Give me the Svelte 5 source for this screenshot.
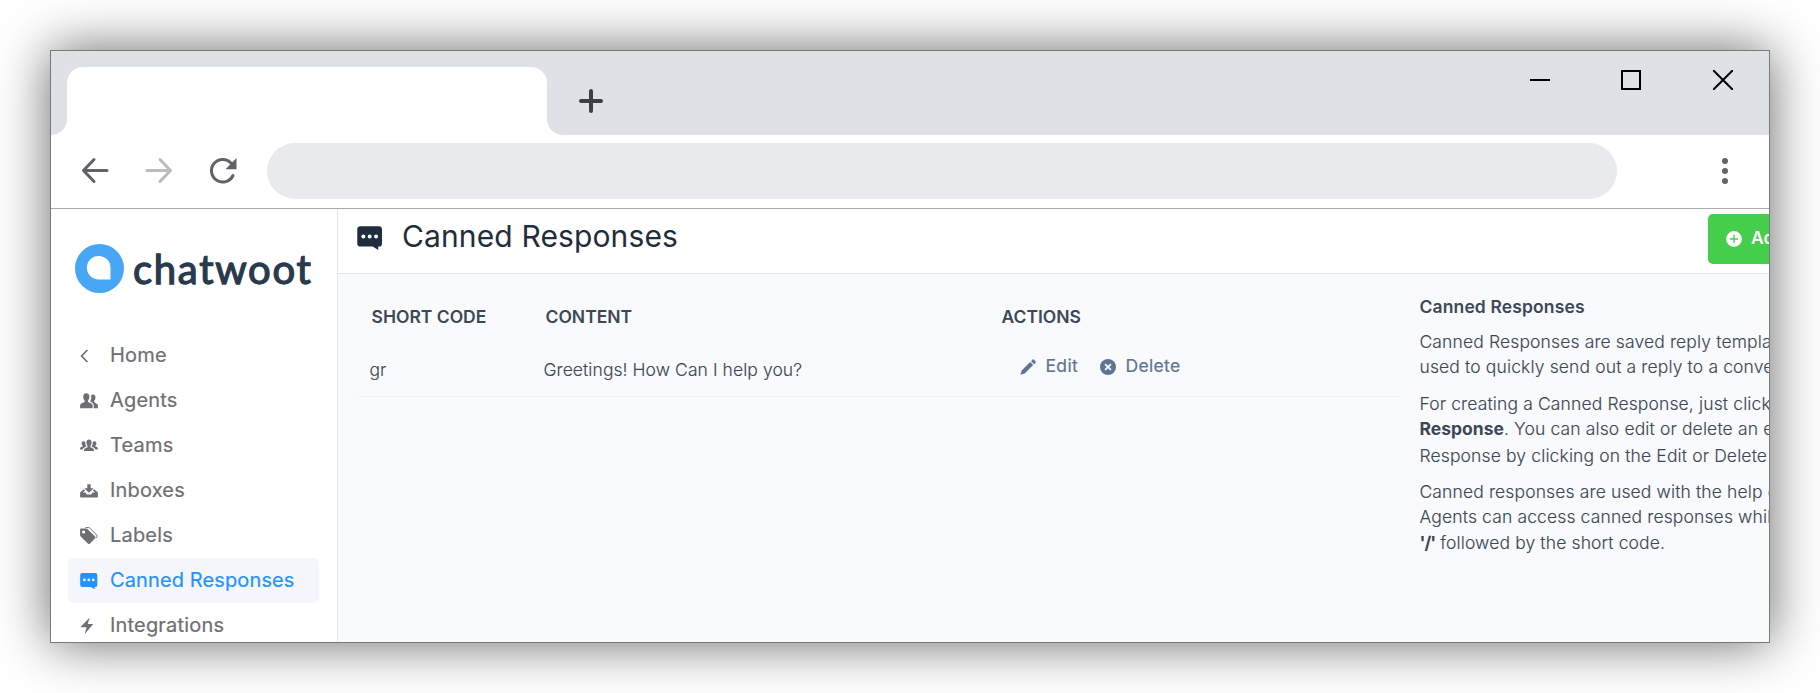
<script>
  const nav = [
    { label: 'Home', icon: 'back' },
    { label: 'Agents', icon: 'agents' },
    { label: 'Teams', icon: 'teams' },
    { label: 'Inboxes', icon: 'inbox' },
    { label: 'Labels', icon: 'tag' },
    { label: 'Canned Responses', icon: 'chat', active: true },
    { label: 'Integrations', icon: 'bolt' }
  ];
</script>

{#snippet icon(name)}
  <svg class="icon" viewBox="0 0 18 18" fill="currentColor">
    {#if name === 'back'}
      <path d="M7.4 3 1.6 9l5.8 6" fill="none" stroke="currentColor" stroke-width="1.7" />
    {:else if name === 'agents'}
      <path d="M6.3 1.2c2 0 3.1 1.4 3.1 3.3 0 1.700-.6 3-1.300 3.900v1.500l3.300 1.600c.9.500 1.200 1.200 1.200 2.200v2.600H.1v-2.600c0-1 .3-1.700 1.200-2.200l3.300-1.600V8.400C3.700 7.500 3.200 6.200 3.200 4.500c0-1.900 1.100-3.300 3.100-3.300Z" />
      <path d="M11 3.200c.6-.6 1.200-.8 1.900-.8 1.700 0 2.600 1.200 2.600 2.900 0 1.500-.5 2.500-1.200 3.300v1.600l2.700 1.700c.7.400.9.900.9 1.700v2.700h-4.200v-2.800c0-1.500-.9-2.500-2.700-3.500l-.6-.3V8.600c.8-1.300 1.200-3.400.6-5.400Z" />
    {:else if name === 'teams'}
      <path d="M9 2.600c1.700 0 2.600 1.200 2.600 2.900 0 1.600-.5 2.700-1.200 3.500v1.200l2.200 1c1 .5 1.400 1.100 1.400 2v.9H4v-.9c0-.9.400-1.500 1.400-2l2.200-1V9C6.900 8.200 6.400 7.100 6.400 5.500c0-1.700.9-2.900 2.600-2.900Z" />
      <path d="M3.700 4.300c.7 0 1.200.2 1.600.7-.2 1.800.2 3.200 1.200 4.400l-2.200 1.200c-.9.500-1.400 1.200-1.600 2H.1v-.8c0-.8.3-1.300 1.100-1.700l1.400-.7V8.500C2 7.900 1.600 7.200 1.600 6.400c0-1.300.8-2.100 2.100-2.100ZM14.300 4.300c-.7 0-1.200.2-1.600.7.200 1.800-.2 3.200-1.200 4.400l2.200 1.200c.9.500 1.400 1.200 1.600 2h2.600v-.8c0-.8-.3-1.300-1.100-1.700l-1.400-.7V8.500c.6-.6 1-1.300 1-2.100 0-1.300-.8-2.100-2.100-2.100Z" />
    {:else if name === 'inbox'}
      <path d="M7.300 2.200h3.400v4h3L9 10.700 4.300 6.200h3Z" />
      <path d="m3.800 7.300 1.300 1.200-2.300 2h2.800l1 2h4.800l1-2h2.800l-2.300-2 1.300-1.200 3.200 2.800c.4.300.5.700.5 1.200v3.200c0 .7-.4 1-1 1H1.100c-.6 0-1-.3-1-1v-3.200c0-.5.1-.9.500-1.200Z" />
    {:else if name === 'tag'}
      <path fill-rule="evenodd" d="M1.300 1.500h4.900c.5 0 .9.200 1.200.5l7.700 7.600c.5.500.5 1.200 0 1.700l-5.300 5.500c-.5.500-1.200.5-1.700 0L.7 9.500C.3 9.100.1 8.700.1 8.200V2.800c0-.8.5-1.300 1.200-1.300Zm2.300 1.900a1.600 1.600 0 1 0 0 3.200 1.600 1.600 0 0 0 0-3.200Z" />
      <path d="M5.500.6h3.200c.4 0 .7.100 1 .4l7.300 7.300c.5.500.5 1 .1 1.500l-1.300 1.300" fill="none" stroke="currentColor" stroke-width="1" />
    {:else if name === 'chat'}
      <path fill-rule="evenodd" d="M2.400.9h12.900c1.200 0 2 .8 2 2v10c0 1.200-.7 2-1.800 2h-.8v2.400l-3.800-2.400H2.400c-1.300 0-2.200-.8-2.200-2V2.900c0-1.200.9-2 2.200-2Zm2 5.600a1.400 1.400 0 1 0 0 2.800 1.400 1.400 0 0 0 0-2.800Zm4.400 0a1.400 1.400 0 1 0 0 2.800 1.400 1.400 0 0 0 0-2.800Zm4.400 0a1.400 1.400 0 1 0 0 2.800 1.400 1.400 0 0 0 0-2.800Z" />
    {:else if name === 'bolt'}
      <path d="M9.700.6 7.800 7h5.400L4.600 17.200l2-7H.3Z" />
    {:else if name === 'edit'}
      <path d="M12.400 2.400 13.900.9c.7-.7 1.300-.6 1.900 0l1.500 1.600c.6.600.7 1.200 0 1.900l-1.400 1.400Zm-1 1 3.400 3.400-9.500 9.400L.4 17.600l1.500-4.700Z" />
    {:else if name === 'delete'}
      <circle cx="9" cy="9" r="9" />
      <path d="m5.700 5.700 6.600 6.600m0-6.600-6.600 6.600" fill="none" stroke="#f9fafc" stroke-width="2" />
    {:else if name === 'add'}
      <circle cx="9" cy="9" r="8.900" />
      <path d="M9 4.300v9.400M4.300 9h9.400" fill="none" stroke="#44ce4b" stroke-width="1.500" />
    {/if}
  </svg>
{/snippet}

<div class="page">
  <div class="window">
    <div class="tabs">
      <div class="gutter"></div>
      <div class="tab"></div>
      <div class="strip">
        <svg class="plus" viewBox="0 0 24 24"><path d="M12 2v20M2 12h20" /></svg>
        <div class="controls">
          <svg viewBox="0 0 20 20"><path d="M0 10h20" /></svg>
          <svg viewBox="0 0 20 20"><path d="M1 1h18v18H1Z" /></svg>
          <svg viewBox="0 0 20 20"><path d="m0 0 20 20M20 0 0 20" /></svg>
        </div>
      </div>
    </div>

    <div class="toolbar">
      <svg class="tool" viewBox="0 0 28 28"><path d="M26 13.500H3M13 2.500 2.500 13.500 13 24.500" /></svg>
      <svg class="tool pale" viewBox="0 0 28 28"><path d="M2 13.500h23M15 2.500l10.500 11L15 24.500" /></svg>
      <svg class="tool" viewBox="0 0 28 28">
        <path d="M24 18.500A11.300 11.300 0 1 1 22 6" />
        <path class="solid" d="M27.500 1v11.300h-11Z" />
      </svg>
      <div class="address"></div>
      <svg class="dots" viewBox="0 0 6 26"><circle cx="3" cy="3" r="3" /><circle cx="3" cy="13" r="3" /><circle cx="3" cy="23" r="3" /></svg>
    </div>

    <div class="app">
      <aside>
        <div class="logo">
          <svg class="mark" viewBox="0 0 49 49">
            <circle cx="24.500" cy="24.500" r="24.500" fill="#47a7f6" />
            <path d="M35.500 35.500H23.600A11.800 11.800 0 1 1 35.500 23.700Z" fill="#fff" />
          </svg>
          <span class="word">chatwoot</span>
        </div>
        <nav>
          {#each nav as item}
            <a class:active={item.active}>{@render icon(item.icon)}<span>{item.label}</span></a>
          {/each}
        </nav>
      </aside>

      <main>
        <header>
          <h1>{@render icon('chat')}<span>Canned Responses</span></h1>
          <button class="add">{@render icon('add')}<span>Add Canned Response</span></button>
        </header>
        <div class="content">
          <table>
            <thead>
              <tr><th class="c1">Short Code</th><th class="c2">Content</th><th>Actions</th></tr>
            </thead>
            <tbody>
              <tr>
                <td>gr</td>
                <td>Greetings! How Can I help you?</td>
                <td>
                  <div class="actions">
                    <button>{@render icon('edit')}<span>Edit</span></button>
                    <button>{@render icon('delete')}<span>Delete</span></button>
                  </div>
                </td>
              </tr>
            </tbody>
          </table>
          <section class="help">
            <h2>Canned Responses</h2>
            <p>Canned Responses are saved reply templates which can be<br />used to quickly send out a reply to a conversation.</p>
            <p>For creating a Canned Response, just click on the <b>Add Canned</b><br /><b class="lead">Response</b>. You can also edit or delete an existing Canned<br />Response by clicking on the Edit or Delete button</p>
            <p>Canned responses are used with the help of <b>Short Codes</b>.<br />Agents can access canned responses while on a chat by typing<br /><b class="lead key">'/'</b> followed by the short code.</p>
          </section>
        </div>
      </main>
    </div>
  </div>
</div>

<style>
  :global(body) { overflow: hidden; background: #fff; }
  * { box-sizing: border-box; }
  .page { height: 693px; padding: 50px; font-family: Inter, sans-serif; }
  .window { display: flex; flex-direction: column; width: 1720px; height: 593px; overflow: hidden; border: 1px solid #777a7d; background: #fff; box-shadow: 0 0 50px rgba(0, 0, 0, .6); }
  svg { display: block; flex: none; }
  button { padding: 0; border: 0; background: none; color: inherit; font: inherit; letter-spacing: inherit; }

  .tabs { display: flex; flex: none; height: 84px; background: linear-gradient(#dee1e6 50%, #fff 50%); }
  .gutter { width: 16px; background: #dee1e6; border-bottom-right-radius: 16px; }
  .tab { width: 480px; background: linear-gradient(#dee1e6 50%, #fff 50%); }
  .tab::before { content: ''; display: block; height: 68px; margin-top: 16px; background: #fff; border-radius: 16px 16px 0 0; }
  .strip { display: flex; flex: 1; justify-content: space-between; padding: 38px 36px 0 32px; background: #dee1e6; border-bottom-left-radius: 16px; }
  .plus { width: 24px; height: 24px; fill: none; stroke: #3c4043; stroke-width: 4; stroke-linecap: round; }
  .controls { display: flex; gap: 72px; margin-top: -19px; }
  .controls svg { width: 20px; height: 20px; fill: none; stroke: #000; stroke-width: 2; }
  .controls svg:first-child { margin-right: -1px; }

  .toolbar { display: flex; flex: none; align-items: center; height: 74px; padding: 0 41px 2px 30px; border-bottom: 1px solid #a9abad; }
  .tool { width: 28px; height: 28px; margin-right: 36px; fill: none; stroke: #5f6368; stroke-width: 3; stroke-linecap: round; stroke-linejoin: round; }
  .pale { stroke: #babcbe; }
  .tool .solid { fill: #5f6368; stroke: none; }
  .address { width: 1350px; height: 56px; margin-left: -6px; border-radius: 28px; background: #e8eaed; }
  .dots { width: 6px; height: 26px; margin-left: auto; fill: #5f6368; }

  .app { display: flex; flex: 1; min-height: 0; }
  aside { flex: none; width: 287px; padding-top: 35px; border-right: 1px solid #e0e6ed; }
  .logo { display: flex; align-items: center; height: 49px; padding-left: 24px; }
  .mark { width: 49px; height: 49px; }
  .word { padding-top: 1px; margin-left: 9px; color: #293a4c; font-family: Lato, sans-serif; font-size: 40px; font-weight: 400; line-height: 49px; letter-spacing: 1.700px; -webkit-text-stroke: 1.300px #293a4c; }
  nav { display: flex; flex-direction: column; margin: 40px 18px 0 17px; }
  nav a { display: flex; flex: none; align-items: center; height: 45px; padding: 0 12px; border-radius: 5px; color: #6e6f73; font-size: 20px; font-weight: 400; letter-spacing: .180px; -webkit-text-stroke: .200px currentColor; }
  nav a span { margin: 0 0 2px 12px; white-space: nowrap; }
  nav .active { background: #f4f6fb; color: #1f93ff; letter-spacing: .120px; }
  .icon { width: 18px; height: 18px; }

  main { flex: 1; min-width: 0; overflow: hidden; background: #f9fafc; }
  header { display: flex; justify-content: space-between; height: 65px; border-bottom: 1px solid #e0e6ed; background: #fff; }
  h1 { display: flex; margin: 9px 0 0 19px; color: #1f2d3d; font-size: 30px; font-weight: 400; line-height: 36px; letter-spacing: .130px; }
  h1 .icon { width: 26px; height: 26px; margin-top: 7px; }
  h1 span { margin-left: 19px; }
  .add { display: flex; flex: none; align-items: center; width: 260px; height: 50px; margin: 5px -199px 0 0; padding-left: 18px; border-radius: 5px; background: #44ce4b; color: #fff; font-size: 17.500px; font-weight: 600; white-space: nowrap; }
  .add .icon { width: 16px; height: 16px; }
  .add span { margin: 0 0 3px 9px; }

  .content { display: flex; align-items: flex-start; padding-left: 20px; }
  table { flex: none; width: 1042px; margin-top: 20px; border-collapse: collapse; table-layout: fixed; color: #3c4858; }
  .c1 { width: 174px; }
  .c2 { width: 456px; }
  th { height: 46px; padding: 0 13.500px 2px; font-size: 17.500px; font-weight: 600; text-align: left; text-transform: uppercase; }
  td { height: 56px; padding: 3px 11.500px 0; border-bottom: 1px solid #eff2f7; font-size: 17.500px; font-weight: 300; letter-spacing: .070px; -webkit-text-stroke: .120px currentColor; }
  .actions { display: flex; gap: 22px; margin: -7px 0 0 20.500px; color: #5d7592; font-weight: 400; letter-spacing: .330px; -webkit-text-stroke: .200px currentColor; }
  .actions button { display: flex; align-items: center; gap: 9.500px; }
  .actions .icon { width: 16px; height: 16px; margin-top: 2px; }
  .help { flex: none; width: 560px; margin-left: 19.500px; padding-top: 20px; color: #3c4858; font-size: 17.500px; line-height: 25.250px; white-space: nowrap; }
  h2 { margin: 0 0 9px; font-size: 17.500px; font-weight: 600; line-height: 26px; letter-spacing: .130px; }
  p { margin: 0 0 11.300px; font-weight: 300; letter-spacing: .130px; -webkit-text-stroke: .120px currentColor; }
  b { font-weight: 700; letter-spacing: 0; -webkit-text-stroke: 0; }
  .lead { line-height: 26.500px; }
  .key { letter-spacing: -1px; }
</style>
